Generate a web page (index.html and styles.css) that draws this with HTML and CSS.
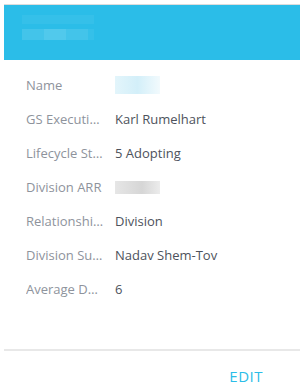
FILE: index.html
```html
<!DOCTYPE html>
<html>
  <head>
    <title>Account card</title>
    <link rel="stylesheet" href="styles.css">
  </head>
  <body>
    <div class="card">

      <div class="cardHeader">
        <div class="blurLine blurTop"></div>
        <div class="blurLine blurBottom">
          <span class="blurChunk"></span>
          <span class="blurChunk chunkLight"></span>
          <span class="blurChunk"></span>
        </div>
      </div>

      <div class="fields">
        <div class="field">
          <span class="label">Name</span>
          <span class="value"><span class="redacted redactedBlue"></span></span>
        </div>
        <div class="field">
          <span class="label">GS Executive Sponsor</span>
          <span class="value">Karl Rumelhart</span>
        </div>
        <div class="field">
          <span class="label">Lifecycle Stage</span>
          <span class="value">5 Adopting</span>
        </div>
        <div class="field">
          <span class="label">Division ARR</span>
          <span class="value"><span class="redacted redactedGray"></span></span>
        </div>
        <div class="field">
          <span class="label">Relationship Type</span>
          <span class="value">Division</span>
        </div>
        <div class="field">
          <span class="label">Division Sub Owner</span>
          <span class="value">Nadav Shem-Tov</span>
        </div>
        <div class="field">
          <span class="label">Average Days</span>
          <span class="value">6</span>
        </div>
      </div>

      <div class="cardFooter">
        <button class="editButton">EDIT</button>
      </div>

    </div>
  </body>
</html>
```

FILE: styles.css
```css
body{
  margin: 0;
  background-color: white;
  font-family: "Open Sans", Arial, sans-serif;
}

.card{
  width: 296px;
  margin-left: 4px;
  margin-top: 4px;
  border-top: 1px solid #dcdcdc;
}

.cardHeader{
  height: 55px;
  background-color: #2bbde8;
  padding: 10px 0 0 18px;
  box-sizing: border-box;
}

/* blurred header text */
.blurLine{
  height: 9px;
  background-color: rgba(255, 255, 255, 0.05);
}

.blurTop{
  width: 72px;
}

.blurBottom{
  display: flex;
  width: 72px;
  margin-top: 5px;
  height: 11px;
}

.blurChunk{
  width: 22px;
  background-color: rgba(255, 255, 255, 0.07);
}

.chunkLight{
  background-color: rgba(255, 255, 255, 0.14);
}

.fields{
  padding: 8px 0 0 22px;
  height: 277px;
  box-sizing: border-box;
}

.field{
  display: flex;
  align-items: center;
  height: 34px;
  font-size: 13px;
}

.label{
  width: 78px;
  margin-right: 11px;
  color: #8e939c;
  white-space: nowrap;
  overflow: hidden;
  text-overflow: ellipsis;
}

.value{
  color: #4d525c;
  white-space: nowrap;
}

.redacted{
  display: block;
  height: 18px;
  width: 45px;
}

.redactedBlue{
  background: linear-gradient(90deg, #e3f5fb 0%, #d3eff9 50%, #f2fafd 100%);
}

.redactedGray{
  height: 13px;
  background: linear-gradient(90deg, #e6e6e6 0%, #d6d6d6 60%, #ececec 100%);
}

.cardFooter{
  border-top: 2px solid #e8e8e8;
  margin-top: 12px;
  display: flex;
  justify-content: flex-end;
  padding: 15px 37px 0 0;
}

.editButton{
  border: none;
  background: none;
  padding: 0;
  color: #2bbde8;
  font-family: "Open Sans", Arial, sans-serif;
  font-size: 15px;
  letter-spacing: 0.5px;
  cursor: pointer;
}
```
